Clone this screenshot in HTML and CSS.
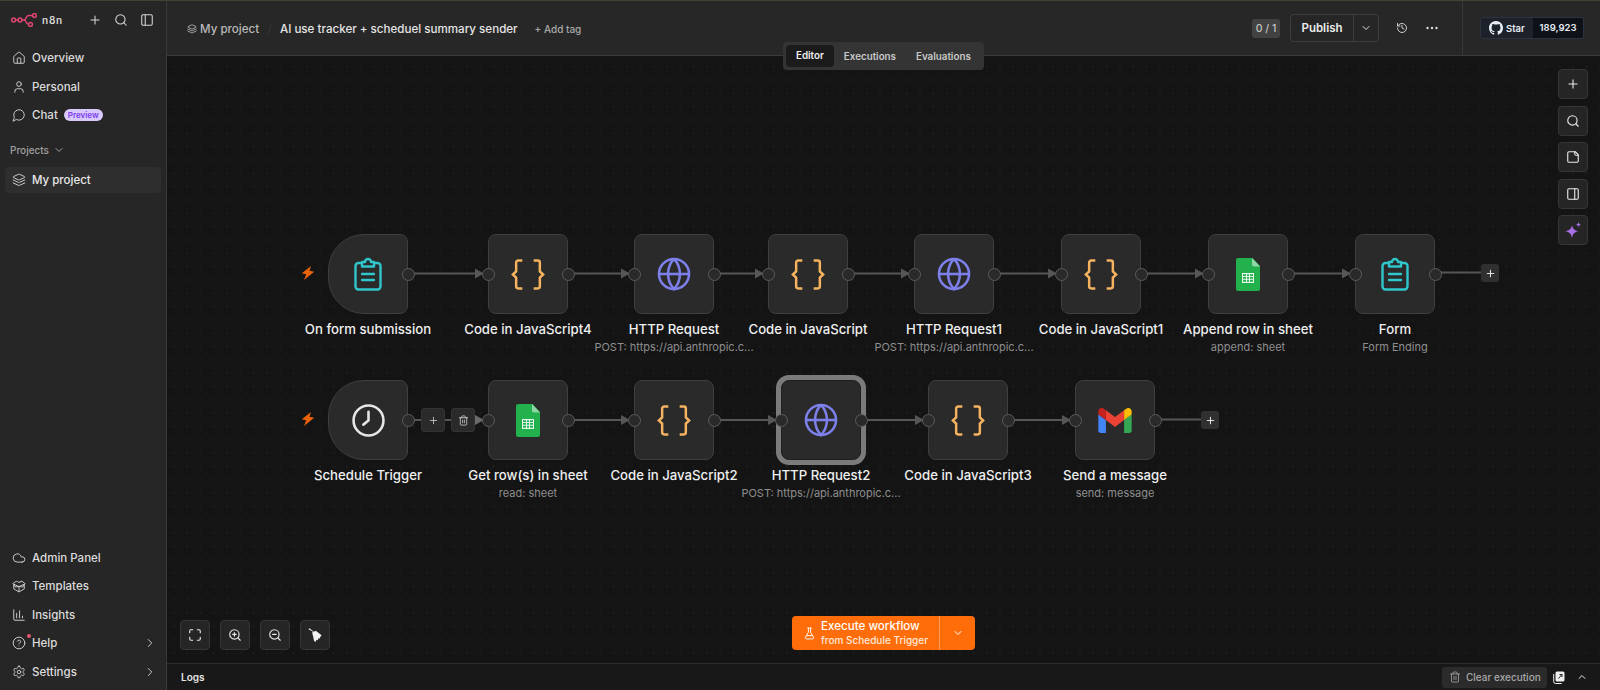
FILE: index.html
```html
<!DOCTYPE html>
<html lang="en">
<head>
    <meta charset="UTF-8">
    <meta name="viewport" content="width=device-width, initial-scale=1.0">
    <title>AI use tracker + scheduel summary sender - n8n</title>
    <link rel="stylesheet" href="styles.css">
</head>
<body>

<!-- Shared icons -->
<svg class="defs" width="0" height="0">
    <symbol id="i-form" viewBox="0 0 28 34"><g fill="none" stroke="#2fc6cc" stroke-width="2.4" stroke-linecap="round" stroke-linejoin="round"><path d="M8 6H4.500a3 3 0 0 0-3 3v20.500a3 3 0 0 0 3 3h19a3 3 0 0 0 3-3V9a3 3 0 0 0-3-3H20"/><path d="M8 5v4.500h12V5h-3a3 3 0 0 0-6 0z"/><path d="M8 17h12M8 23h12"/></g></symbol>
    <symbol id="i-code" viewBox="0 0 33 30"><g fill="none" stroke="#f5b25f" stroke-width="2.4" stroke-linejoin="miter"><path d="M11 1.500H7a2 2 0 0 0-2 2V12l-3.200 3L5 18v8.500a2 2 0 0 0 2 2h4"/><path d="M22 1.500h4a2 2 0 0 1 2 2V12l3.200 3-3.200 3v8.500a2 2 0 0 1-2 2h-4"/></g></symbol>
    <symbol id="i-globe" viewBox="0 0 24 24"><g fill="none" stroke="#7d80ea" stroke-width="1.8"><circle cx="12" cy="12" r="10.600"/><path d="M12 1.400a15.500 15.500 0 0 0 0 21.200 15.500 15.500 0 0 0 0-21.200"/><path d="M1.400 12h21.200"/></g></symbol>
    <symbol id="i-sheet" viewBox="0 0 24 33"><path fill="#23b14d" d="M2 0h14.500L24 8v23a2 2 0 0 1-2 2H2a2 2 0 0 1-2-2V2a2 2 0 0 1 2-2z"/><path fill="#8fd6a6" d="M16 0l8 8.500h-6a2 2 0 0 1-2-2z"/><path fill="#e9f7ee" fill-rule="evenodd" d="M6 15h12v10H6zM7 16.200v1.800h3v-1.800zM11 16.200v1.800h2v-1.800zM14 16.200v1.800h3v-1.800zM7 19v1.800h3V19zM11 19v1.800h2V19zM14 19v1.800h3V19zM7 21.800v2h3v-2zM11 21.800v2h2v-2zM14 21.800v2h3v-2z"/></symbol>
    <symbol id="i-bolt" viewBox="0 0 14 14"><path fill="#e8630a" d="M10 0 .8 7.200l4.400 1L3 14l10.200-8.200-4.700-1z"/></symbol>
</svg>

<aside class="sidebar">
    <div class="side-top">
        <svg class="logo" width="26" height="14" viewBox="0 0 26 14" fill="none" stroke="#e0456f" stroke-width="1.5"><circle cx="2.600" cy="7" r="1.900"/><circle cx="9" cy="7" r="1.900"/><circle cx="23.500" cy="2.500" r="1.900"/><circle cx="19.500" cy="11.500" r="1.900"/><path d="M4.500 7h2.600M10.900 7h2.400c2.200 0 1.500-4.500 4-4.500h4.300M13.300 7c2.200 0 1.500 4.500 4.300 4.500"/></svg>
        <span class="logo-text">n8n</span>
        <svg class="ic top-plus" viewBox="0 0 24 24"><path d="M5 12h14M12 5v14"/></svg>
        <svg class="ic" viewBox="0 0 24 24"><circle cx="11" cy="11" r="8"/><path d="m21 21-4.300-4.300"/></svg>
        <svg class="ic" viewBox="0 0 24 24"><rect x="3" y="3" width="18" height="18" rx="2"/><path d="M9 3v18"/></svg>
    </div>

    <nav class="menu">
        <a class="item"><svg class="ic" viewBox="0 0 24 24"><path d="M15 21v-8a1 1 0 0 0-1-1h-4a1 1 0 0 0-1 1v8"/><path d="M3 10a2 2 0 0 1 .7-1.500l7-6a2 2 0 0 1 2.600 0l7 6A2 2 0 0 1 21 10v9a2 2 0 0 1-2 2H5a2 2 0 0 1-2-2z"/></svg>Overview</a>
        <a class="item"><svg class="ic" viewBox="0 0 24 24"><path d="M19 21v-2a4 4 0 0 0-4-4H9a4 4 0 0 0-4 4v2"/><circle cx="12" cy="7" r="4"/></svg>Personal</a>
        <a class="item"><svg class="ic" viewBox="0 0 24 24"><path d="M7.900 20A9 9 0 1 0 4 16.100L2 22z"/></svg>Chat<span class="preview">Preview</span></a>
    </nav>

    <div class="projects-head">Projects <svg class="ic tiny" viewBox="0 0 24 24"><path d="m6 9 6 6 6-6"/></svg></div>
    <a class="item active"><svg class="ic" viewBox="0 0 24 24"><path d="M12.800 2.200a2 2 0 0 0-1.600 0L2.600 6.100a1 1 0 0 0 0 1.800l8.600 3.900a2 2 0 0 0 1.600 0l8.600-3.900a1 1 0 0 0 0-1.800z"/><path d="m2 12 9.200 4.200a2 2 0 0 0 1.600 0L22 12"/><path d="m2 17 9.200 4.200a2 2 0 0 0 1.600 0L22 17"/></svg>My project</a>

    <nav class="menu bottom">
        <a class="item"><svg class="ic" viewBox="0 0 24 24"><path d="M17.500 19H9a7 7 0 1 1 6.700-9h1.800a4.500 4.500 0 1 1 0 9z"/></svg>Admin Panel</a>
        <a class="item"><svg class="ic" viewBox="0 0 24 24"><path d="M12 22v-9"/><path d="M15.200 4.200 12 6 8.800 4.200a2 2 0 0 0-2 0L2.500 7a1 1 0 0 0 0 1.700l9.500 4.300 9.500-4.300a1 1 0 0 0 0-1.700l-4.300-2.800a2 2 0 0 0-2 0z"/><path d="M3 10v7l9 5 9-5v-7"/><path d="m2.500 8.700 3 5 6.500-1 6.500 1 3-5"/></svg>Templates</a>
        <a class="item"><svg class="ic" viewBox="0 0 24 24"><path d="M3 3v16a2 2 0 0 0 2 2h16"/><path d="M8 17V9M13 17V5M18 17v-3"/></svg>Insights</a>
        <a class="item has-dot"><svg class="ic" viewBox="0 0 24 24"><circle cx="12" cy="12" r="10"/><path d="M9.100 9a3 3 0 0 1 5.800 1c0 2-3 3-3 3M12 17h.01"/></svg>Help<svg class="ic chev" viewBox="0 0 24 24"><path d="m9 18 6-6-6-6"/></svg><span class="dot"></span></a>
        <a class="item"><svg class="ic" viewBox="0 0 24 24"><path d="M12.200 2h-.4a2 2 0 0 0-2 2v.2a2 2 0 0 1-1 1.700l-.4.300a2 2 0 0 1-2 0l-.2-.1a2 2 0 0 0-2.700.7l-.2.400a2 2 0 0 0 .7 2.700l.2.100a2 2 0 0 1 1 1.700v.5a2 2 0 0 1-1 1.800l-.2.100a2 2 0 0 0-.7 2.700l.2.400a2 2 0 0 0 2.700.7l.2-.1a2 2 0 0 1 2 0l.4.300a2 2 0 0 1 1 1.700v.2a2 2 0 0 0 2 2h.4a2 2 0 0 0 2-2v-.2a2 2 0 0 1 1-1.700l.4-.3a2 2 0 0 1 2 0l.2.100a2 2 0 0 0 2.700-.7l.2-.4a2 2 0 0 0-.7-2.700l-.2-.1a2 2 0 0 1-1-1.800v-.5a2 2 0 0 1 1-1.700l.2-.1a2 2 0 0 0 .7-2.700l-.2-.4a2 2 0 0 0-2.700-.7l-.2.100a2 2 0 0 1-2 0l-.4-.3a2 2 0 0 1-1-1.700V4a2 2 0 0 0-2-2z"/><circle cx="12" cy="12" r="3"/></svg>Settings<svg class="ic chev" viewBox="0 0 24 24"><path d="m9 18 6-6-6-6"/></svg></a>
    </nav>
</aside>

<main class="main">
    <header class="topbar">
        <span class="crumb"><svg class="ic crumb-ic" viewBox="0 0 24 24"><path d="M12.800 2.200a2 2 0 0 0-1.600 0L2.600 6.100a1 1 0 0 0 0 1.800l8.600 3.900a2 2 0 0 0 1.600 0l8.600-3.900a1 1 0 0 0 0-1.800z"/><path d="m2 12 9.200 4.200a2 2 0 0 0 1.600 0L22 12"/><path d="m2 17 9.200 4.200a2 2 0 0 0 1.600 0L22 17"/></svg>My project</span>
        <span class="slash">/</span>
        <span class="wf-title">AI use tracker + scheduel summary sender</span>
        <span class="add-tag">+ Add tag</span>

        <div class="top-right">
            <span class="count">0 / 1</span>
            <div class="publish"><span class="publish-text">Publish</span><span class="publish-more"><svg class="ic tiny" viewBox="0 0 24 24"><path d="m6 9 6 6 6-6"/></svg></span></div>
            <svg class="ic history" viewBox="0 0 24 24"><path d="M3 12a9 9 0 1 0 9-9 9.700 9.700 0 0 0-6.700 2.700L3 8"/><path d="M3 3v5h5"/><path d="M12 7v5l4 2"/></svg>
            <svg class="dots" width="12" height="4" viewBox="0 0 12 4"><circle cx="1.500" cy="2" r="1.200"/><circle cx="6" cy="2" r="1.200"/><circle cx="10.500" cy="2" r="1.200"/></svg>
        </div>
        <div class="star-box">
            <div class="star">
                <span class="star-left"><svg width="14" height="14" viewBox="0 0 16 16" fill="#e6edf3"><path d="M8 0C3.580 0 0 3.580 0 8c0 3.540 2.290 6.530 5.470 7.590.4.070.55-.17.55-.38 0-.19-.01-.82-.01-1.490-2.010.37-2.530-.49-2.690-.94-.09-.23-.48-.94-.82-1.130-.28-.15-.68-.52-.01-.53.63-.01 1.080.58 1.230.82.720 1.210 1.870.87 2.330.66.070-.52.280-.87.510-1.070-1.780-.2-3.640-.89-3.640-3.950 0-.87.310-1.590.820-2.150-.08-.2-.36-1.020.080-2.120 0 0 .67-.21 2.200.82.640-.18 1.320-.27 2-.27.680 0 1.360.090 2 .27 1.530-1.040 2.200-.82 2.200-.82.440 1.100.160 1.920.080 2.120.510.560.820 1.270.820 2.150 0 3.070-1.870 3.750-3.650 3.950.290.250.540.730.540 1.480 0 1.070-.01 1.930-.01 2.200 0 .21.150.46.550.38A8.013 8.013 0 0 0 16 8c0-4.420-3.580-8-8-8z"/></svg>Star</span>
                <span class="star-count">189,923</span>
            </div>
        </div>
    </header>

    <div class="tabs">
        <span class="tab on">Editor</span>
        <span class="tab">Executions</span>
        <span class="tab">Evaluations</span>
    </div>

    <section class="canvas">
        <!-- graph uses page coordinates, shifted back by the canvas origin -->
        <div class="graph">
            <svg class="edges" width="1600" height="690" viewBox="0 0 1600 690">
                <g stroke="#565656" stroke-width="2" fill="none">
                    <path d="M408 273.500H478M568 273.500H624M714 273.500H758M848 273.500H904M994 273.500H1051M1141 273.500H1198M1288 273.500H1345"/>
                    <path d="M1435 272.500H1481M1155 419.500H1201"/>
                    <path d="M408 420H478M568 420H624M714 420H772M866 420H918M1008 420H1065"/>
                </g>
                <g fill="#565656">
                    <path d="M475 268.500l9 5-9 5zM621 268.500l9 5-9 5zM755 268.500l9 5-9 5zM901 268.500l9 5-9 5zM1048 268.500l9 5-9 5zM1195 268.500l9 5-9 5zM1342 268.500l9 5-9 5z"/>
                    <path d="M621 415l9 5-9 5zM768 415l9 5-9 5zM915 415l9 5-9 5zM1062 415l9 5-9 5z"/>
                    <path fill="#6a6a6a" d="M475 415l9 5-9 5z"/>
                </g>
            </svg>

            <svg class="bolt b1"><use href="#i-bolt"/></svg>
            <svg class="bolt b2"><use href="#i-bolt"/></svg>

            <!-- first row -->
            <div class="node trigger r1 x328"><svg class="ni-form"><use href="#i-form"/></svg><i class="port out"></i><div class="label">On form submission</div></div>
            <div class="node r1 x488"><svg class="ni-code"><use href="#i-code"/></svg><i class="port in"></i><i class="port out"></i><div class="label">Code in JavaScript4</div></div>
            <div class="node r1 x634"><svg class="ni-globe"><use href="#i-globe"/></svg><i class="port in"></i><i class="port out"></i><div class="label">HTTP Request<small>POST: https://api.anthropic.c...</small></div></div>
            <div class="node r1 x768"><svg class="ni-code"><use href="#i-code"/></svg><i class="port in"></i><i class="port out"></i><div class="label">Code in JavaScript</div></div>
            <div class="node r1 x914"><svg class="ni-globe"><use href="#i-globe"/></svg><i class="port in"></i><i class="port out"></i><div class="label">HTTP Request1<small>POST: https://api.anthropic.c...</small></div></div>
            <div class="node r1 x1061"><svg class="ni-code"><use href="#i-code"/></svg><i class="port in"></i><i class="port out"></i><div class="label">Code in JavaScript1</div></div>
            <div class="node r1 x1208"><svg class="ni-sheet"><use href="#i-sheet"/></svg><i class="port in"></i><i class="port out"></i><div class="label">Append row in sheet<small>append: sheet</small></div></div>
            <div class="node r1 x1355"><svg class="ni-form"><use href="#i-form"/></svg><i class="port in"></i><i class="port out"></i><div class="label">Form<small>Form Ending</small></div></div>

            <!-- second row -->
            <div class="node trigger r2 x328"><svg class="ni-clock" viewBox="0 0 32 32" fill="none" stroke="#e6e6e6" stroke-width="2.500" stroke-linecap="round"><circle cx="16" cy="16" r="14.500"/><path d="M16 7.500V16l-5 4"/></svg><i class="port out"></i><div class="label">Schedule Trigger</div></div>
            <div class="node r2 x488"><svg class="ni-sheet"><use href="#i-sheet"/></svg><i class="port in"></i><i class="port out"></i><div class="label">Get row(s) in sheet<small>read: sheet</small></div></div>
            <div class="node r2 x634"><svg class="ni-code"><use href="#i-code"/></svg><i class="port in"></i><i class="port out"></i><div class="label">Code in JavaScript2</div></div>
            <div class="node selected r2 x781"><svg class="ni-globe"><use href="#i-globe"/></svg><i class="port in"></i><i class="port out"></i><div class="label">HTTP Request2<small>POST: https://api.anthropic.c...</small></div></div>
            <div class="node r2 x928"><svg class="ni-code"><use href="#i-code"/></svg><i class="port in"></i><i class="port out"></i><div class="label">Code in JavaScript3</div></div>
            <div class="node r2 x1075"><svg class="ni-gmail" viewBox="52 42 88 66"><path fill="#4285f4" d="M58 108h14V74L52 59v43c0 3.320 2.690 6 6 6"/><path fill="#34a853" d="M120 108h14c3.320 0 6-2.690 6-6V59l-20 15"/><path fill="#fbbc04" d="M120 48v26l20-15v-8c0-7.420-8.470-11.650-14.400-7.200"/><path fill="#ea4335" d="M72 74V48l24 18 24-18v26L96 92"/><path fill="#c5221f" d="M52 51v8l20 15V48l-5.600-4.200c-5.940-4.450-14.400-.22-14.400 7.200"/></svg><i class="port in"></i><i class="port out"></i><div class="label">Send a message<small>send: message</small></div></div>

            <!-- edge toolbar and the add handles -->
            <span class="edge-btn e-plus"><svg class="ic" viewBox="0 0 24 24"><path d="M5 12h14M12 5v14"/></svg></span>
            <span class="edge-btn e-trash"><svg class="ic" viewBox="0 0 24 24"><path d="M3 6h18M19 6v14a2 2 0 0 1-2 2H7a2 2 0 0 1-2-2V6M8 6V4a2 2 0 0 1 2-2h4a2 2 0 0 1 2 2v2M10 11v6M14 11v6"/></svg></span>
            <span class="add-btn a1"><svg class="ic" viewBox="0 0 24 24"><path d="M5 12h14M12 5v14"/></svg></span>
            <span class="add-btn a2"><svg class="ic" viewBox="0 0 24 24"><path d="M5 12h14M12 5v14"/></svg></span>
        </div>

        <div class="right-tools">
            <span class="tool"><svg class="ic" viewBox="0 0 24 24"><path d="M5 12h14M12 5v14"/></svg></span>
            <span class="tool"><svg class="ic" viewBox="0 0 24 24"><circle cx="11" cy="11" r="8"/><path d="m21 21-4.300-4.300"/></svg></span>
            <span class="tool"><svg class="ic" viewBox="0 0 24 24"><path d="M16 3H5a2 2 0 0 0-2 2v14a2 2 0 0 0 2 2h14a2 2 0 0 0 2-2V8z"/><path d="M15 3v4a2 2 0 0 0 2 2h4"/></svg></span>
            <span class="tool"><svg class="ic" viewBox="0 0 24 24"><rect x="3" y="3" width="18" height="18" rx="2"/><path d="M15 3v18"/></svg></span>
            <span class="tool"><svg width="17" height="17" viewBox="0 0 17 17" fill="#a86fe6"><path d="M7 3.200c.7 3.500 2.400 5.200 6.500 6-4.100.8-5.800 2.500-6.500 7-.7-4.500-2.400-6.200-7-7 4.600-.8 6.300-2.500 7-6z"/><path d="M13.500 0c.3 1.500 1 2.200 2.800 2.600-1.800.4-2.500 1.100-2.800 2.700-.3-1.600-1-2.300-2.800-2.700 1.800-.4 2.500-1.100 2.800-2.600z"/></svg></span>
        </div>

        <div class="left-tools">
            <span class="tool"><svg class="ic" viewBox="0 0 24 24"><path d="M8 3H5a2 2 0 0 0-2 2v3M21 8V5a2 2 0 0 0-2-2h-3M3 16v3a2 2 0 0 0 2 2h3M16 21h3a2 2 0 0 0 2-2v-3"/></svg></span>
            <span class="tool"><svg class="ic" viewBox="0 0 24 24"><circle cx="11" cy="11" r="8"/><path d="m21 21-4.300-4.300M11 8v6M8 11h6"/></svg></span>
            <span class="tool"><svg class="ic" viewBox="0 0 24 24"><circle cx="11" cy="11" r="8"/><path d="m21 21-4.300-4.300M8 11h6"/></svg></span>
            <span class="tool"><svg width="15" height="15" viewBox="0 0 16 16" fill="#f2f2f2"><path d="M.5 1.200 1.500.2 6.300 4l2-1 6.200 4.800-1.300 1.400-.6 2-1.500-.3-.6 2.100-1.500-.5-1 2.500-1.600-1.500-.9-4.500-1-3.700.6-1.500z"/></svg></span>
        </div>

        <div class="run">
            <div class="run-main">
                <svg class="ic run-ic" viewBox="0 0 24 24"><path d="M10 2v7.500L4.500 19a2 2 0 0 0 1.700 3h11.600a2 2 0 0 0 1.700-3L14 9.500V2M8.500 2h7M7 16h10"/></svg>
                <div class="run-text"><b>Execute workflow</b><span>from Schedule Trigger</span></div>
            </div>
            <div class="run-more"><svg class="ic tiny" viewBox="0 0 24 24"><path d="m6 9 6 6 6-6"/></svg></div>
        </div>
    </section>

    <footer class="logs">
        <b class="logs-title">Logs</b>
        <span class="clear"><svg class="ic" viewBox="0 0 24 24"><path d="M3 6h18M19 6v14a2 2 0 0 1-2 2H7a2 2 0 0 1-2-2V6M8 6V4a2 2 0 0 1 2-2h4a2 2 0 0 1 2 2v2M10 11v6M14 11v6"/></svg>Clear execution</span>
        <svg class="popout" width="12" height="13" viewBox="0 0 12 13"><rect x="2.500" y="0.500" width="9" height="10" rx="1.500" fill="#eee"/><path d="M5.500 7.500 9 3.500M6.500 3.500H9v2.500" stroke="#222" fill="none"/><path d="M.7 3v7.500a2 2 0 0 0 2 2h6" stroke="#eee" fill="none"/></svg>
        <svg class="ic tiny logs-up" viewBox="0 0 24 24"><path d="m6 15 6-6 6 6"/></svg>
    </footer>
</main>

</body>
</html>
```
FILE: styles.css
```css
* {
    box-sizing: border-box;
}
html, body {
    margin: 0;
    height: 100%;
}
body {
    display: flex;
    height: 690px;
    overflow: hidden;
    background: #141414;
    color: #e4e4e4;
    font-family: Inter, "Noto Sans", sans-serif;
    font-size: 13px;
    border-top: 1px solid #3e4436;
}
.defs {
    position: absolute;
}
.ic {
    width: 16px;
    height: 16px;
    fill: none;
    stroke: currentColor;
    stroke-width: 2;
    stroke-linecap: round;
    stroke-linejoin: round;
    flex: none;
}
.ic.tiny {
    width: 12px;
    height: 12px;
}

/* Sidebar */
.sidebar {
    width: 167px;
    flex: none;
    display: flex;
    flex-direction: column;
    background: #262626;
    border-right: 1px solid #3a3a3a;
    padding: 0 5px;
}
.side-top {
    display: flex;
    align-items: center;
    height: 38px;
    padding: 0 6px;
    color: #d8d8d8;
}
.logo {
    flex: none;
}
.logo-text {
    margin-left: 5px;
    font-size: 10px;
    font-weight: 600;
    letter-spacing: 0.8px;
}
.side-top .ic {
    margin-left: 12px;
    width: 14px;
    height: 14px;
    stroke-width: 1.8;
}
.side-top .top-plus {
    margin-left: 25px;
}
.menu {
    display: flex;
    flex-direction: column;
    margin-top: 5px;
}
.menu.bottom {
    margin-top: auto;
    padding-bottom: 4px;
}
.item {
    position: relative;
    display: flex;
    align-items: center;
    gap: 6px;
    height: 28.5px;
    padding: 0 7px;
    color: #dcdcdc;
    font-weight: 500;
    font-size: 11.5px;
    border-radius: 4px;
}
.item .ic {
    width: 14px;
    height: 14px;
    stroke-width: 1.7;
    color: #c8c8c8;
}
.item.active {
    height: 26px;
    background: #2e2e2e;
    color: #e8e8e8;
    margin-top: 10px;
}
.preview {
    padding: 0 4px;
    height: 12px;
    line-height: 12px;
    border-radius: 6px;
    background: #d9c8fb;
    color: #7a3cf0;
    font-size: 8px;
    font-weight: 600;
}
.projects-head {
    display: flex;
    align-items: center;
    gap: 4px;
    margin-top: 13px;
    padding: 0 5px;
    height: 14px;
    color: #a0a0a0;
    font-size: 10px;
    font-weight: 500;
}
.chev {
    margin-left: auto;
    margin-right: -3px;
}
.dot {
    position: absolute;
    left: 22px;
    top: 5px;
    width: 4px;
    height: 4px;
    border-radius: 50%;
    background: #e8556f;
}

/* Main column */
.main {
    flex: 1;
    min-width: 0;
    position: relative;
    display: flex;
    flex-direction: column;
}
.topbar {
    height: 55px;
    flex: none;
    display: flex;
    align-items: center;
    padding-left: 20px;
    background: #272727;
    border-bottom: 1px solid #3a3a3a;
    color: #e0e0e0;
}
.crumb, .slash, .wf-title, .add-tag {
    margin-top: 2px;
}
.crumb {
    display: flex;
    align-items: center;
    gap: 3px;
    color: #b8b8b8;
    font-size: 11.6px;
    font-weight: 500;
}
.crumb-ic {
    width: 10px;
    height: 10px;
}
.slash {
    margin-left: 8px;
    margin-right: 8px;
    color: #363636;
}
.wf-title {
    font-size: 11.6px;
    font-weight: 500;
    color: #e4e4e4;
}
.add-tag {
    margin-left: 17px;
    font-size: 10px;
    font-weight: 500;
    color: #a8a8a8;
}
.top-right {
    display: flex;
    align-items: center;
    margin-left: auto;
    padding-right: 24px;
    height: 100%;
    border-right: 1px solid #383838;
}
.count {
    width: 28px;
    padding: 3px 0;
    text-align: center;
    border-radius: 3px;
    background: #424242;
    color: #c4c4c4;
    font-size: 10.5px;
    font-weight: 500;
}
.publish {
    display: flex;
    height: 28px;
    margin-left: 10px;
    border: 1px solid #3e3e3e;
    border-radius: 4px;
    background: #262626;
}
.publish-text {
    width: 62px;
    line-height: 27px;
    text-align: center;
    font-size: 11.5px;
    font-weight: 600;
    color: #ececec;
}
.publish-more {
    display: flex;
    align-items: center;
    justify-content: center;
    width: 25px;
    border-left: 1px solid #3e3e3e;
}
.history {
    width: 12px;
    height: 12px;
    margin-left: 17px;
    color: #cfcfcf;
}
.dots {
    margin-left: 18px;
    fill: #dcdcdc;
}
.star-box {
    width: 137px;
    padding-left: 17px;
}
.star {
    display: flex;
    width: 104px;
    height: 22px;
    border: 1px solid #2c3240;
    border-radius: 3px;
    font-size: 9.5px;
    font-weight: 600;
    color: #e6edf3;
    overflow: hidden;
}
.star-left {
    display: flex;
    align-items: center;
    gap: 3px;
    width: 52px;
    padding-left: 8px;
    background: #1c212a;
}
.star-count {
    flex: 1;
    line-height: 20px;
    text-align: center;
    background: #0e1218;
}

/* Tabs over the header border */
.tabs {
    position: absolute;
    left: 616px;
    top: 41px;
    display: flex;
    align-items: center;
    width: 201px;
    height: 28px;
    padding: 0 3px;
    background: #343434;
    border-radius: 4px;
    z-index: 5;
    font-size: 9.8px;
    font-weight: 600;
    color: #c8c8c8;
}
.tab {
    padding: 0 10px;
}
.tab.on {
    height: 22px;
    line-height: 22px;
    background: #1b1b1b;
    border-radius: 4px;
    color: #f0f0f0;
}

/* Canvas */
.canvas {
    position: relative;
    flex: 1;
    overflow: hidden;
    background-color: #141414;
    background-image: radial-gradient(circle, #262626 0.6px, transparent 0.8px);
    background-size: 13.33px 13.33px;
    background-position: 0 4px;
}
.graph {
    position: absolute;
    left: -167px;
    top: -56px;
    width: 1600px;
    height: 690px;
}
.edges {
    position: absolute;
    left: 0;
    top: 0;
}
.node {
    position: absolute;
    width: 80px;
    height: 80px;
    display: flex;
    align-items: center;
    justify-content: center;
    background: #2a2a2a;
    border: 1px solid #3f3f3f;
    border-radius: 8px;
}
.node.trigger {
    border-radius: 36px 8px 8px 36px;
}
.node.selected {
    border-color: #1f1f1f;
    box-shadow: 0 0 0 5px #7b7b7b;
}
.r1 { top: 234px; }
.r2 { top: 380px; }
.x328 { left: 328px; }
.x488 { left: 488px; }
.x634 { left: 634px; }
.x768 { left: 768px; }
.x781 { left: 781px; }
.x914 { left: 914px; }
.x928 { left: 928px; }
.x1061 { left: 1061px; }
.x1075 { left: 1075px; }
.x1208 { left: 1208px; }
.x1355 { left: 1355px; }

.ni-form { width: 28px; height: 34px; }
.ni-code { width: 34px; height: 31px; }
.ni-globe { width: 34px; height: 34px; }
.ni-sheet { width: 24px; height: 33px; }
.ni-clock { width: 33px; height: 33px; }
.ni-gmail { width: 34px; height: 25px; }

.port {
    position: absolute;
    top: 32.5px;
    width: 13px;
    height: 13px;
    border-radius: 50%;
    background: #2a2a2a;
    border: 1.5px solid #5c5c5c;
}
.port.in { left: -7.5px; }
.port.out { right: -7.5px; }

.label {
    position: absolute;
    top: 84px;
    left: 50%;
    transform: translateX(-50%);
    white-space: nowrap;
    text-align: center;
    font-size: 13.2px;
    line-height: 20px;
    font-weight: 500;
    color: #efefef;
}
.label small {
    display: block;
    margin-top: -1px;
    font-size: 11px;
    line-height: 18px;
    font-weight: 400;
    color: #8e8e8e;
}
.bolt {
    position: absolute;
    width: 14px;
    height: 14px;
    left: 301px;
}
.b1 { top: 266px; }
.b2 { top: 412px; }

.edge-btn, .add-btn {
    position: absolute;
    display: flex;
    align-items: center;
    justify-content: center;
    background: #2a2a2a;
    border-radius: 3px;
    color: #e0e0e0;
}
.edge-btn {
    top: 408px;
    width: 24px;
    height: 24px;
    border: 1px solid #333;
}
.edge-btn .ic {
    width: 11px;
    height: 11px;
    stroke-width: 1.6;
}
.e-plus { left: 421px; }
.e-trash { left: 451px; }
.add-btn {
    width: 18px;
    height: 18px;
    background: #303030;
}
.add-btn .ic {
    width: 11px;
    height: 11px;
    stroke-width: 2.4;
}
.a1 { left: 1481px; top: 264px; }
.a2 { left: 1201px; top: 411px; }

/* Canvas tools */
.tool {
    display: flex;
    align-items: center;
    justify-content: center;
    width: 30px;
    height: 30px;
    background: #252525;
    border: 1px solid #363636;
    border-radius: 4px;
    color: #ececec;
}
.tool .ic {
    width: 14px;
    height: 14px;
    stroke-width: 1.9;
}
.right-tools {
    position: absolute;
    right: 12px;
    top: 13px;
    display: flex;
    flex-direction: column;
    gap: 6.5px;
}
.left-tools {
    position: absolute;
    left: 13px;
    top: 564px;
    display: flex;
    gap: 10px;
}
.run {
    position: absolute;
    left: 625px;
    top: 560px;
    display: flex;
    height: 34px;
    background: #ff6d0a;
    border-radius: 4px;
    color: #fff;
}
.run-main {
    display: flex;
    align-items: center;
    gap: 5px;
    width: 148px;
    padding-left: 11px;
    border-right: 1px solid #ff9a58;
}
.run-ic {
    width: 13px;
    height: 13px;
    stroke-width: 1.7;
}
.run-text {
    display: flex;
    flex-direction: column;
    line-height: 12px;
    margin-top: -2px;
}
.run-text b {
    font-size: 11.6px;
    font-weight: 500;
    line-height: 15px;
}
.run-text span {
    font-size: 10px;
    font-weight: 500;
    color: #ffe9da;
}
.run-more {
    display: flex;
    flex: 1;
    width: 35px;
    align-items: center;
    justify-content: center;
}

/* Logs bar */
.logs {
    height: 27px;
    flex: none;
    display: flex;
    align-items: center;
    padding-left: 14px;
    background: #181818;
    border-top: 1px solid #2e2e2e;
}
.logs-title {
    font-size: 10px;
    font-weight: 600;
    color: #e4e4e4;
}
.clear {
    display: flex;
    align-items: center;
    gap: 5px;
    width: 105px;
    height: 21px;
    margin-left: auto;
    padding-left: 7px;
    background: #2b2b2b;
    border-radius: 3px;
    color: #a8a8a8;
    font-size: 10px;
    font-weight: 500;
}
.clear .ic {
    width: 12px;
    height: 12px;
    stroke-width: 1.6;
}
.popout {
    margin-left: 6px;
}
.logs-up {
    margin: 0 12px 0 11px;
    color: #e4e4e4;
}
```
